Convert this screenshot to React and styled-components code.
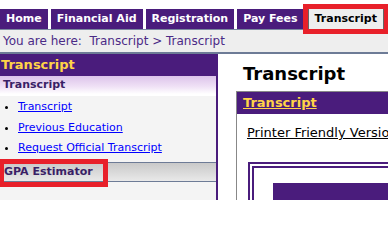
import styled, { createGlobalStyle } from "styled-components";

const GlobalStyle = createGlobalStyle`
  body {
    margin: 0;
    background: #fff;
    overflow: hidden;
    font-family: "DejaVu Sans", Verdana, sans-serif;
  }
`;

const PURPLE = "#4a1c7c";

const tabs = [
  { label: "Home" },
  { label: "Financial Aid" },
  { label: "Registration" },
  { label: "Pay Fees" },
  { label: "Transcript", active: true },
  { label: "Housing" },
];

const sideLinks = ["Transcript", "Previous Education", "Request Official Transcript"];

export default function App() {
  return (
    <Page>
      <GlobalStyle />
      <TabBar>
        {tabs.map((t) => (
          <Tab key={t.label} $active={t.active}>
            {t.label}
          </Tab>
        ))}
      </TabBar>
      <Crumbs>You are here:&nbsp; Transcript &gt; Transcript</Crumbs>
      <Body>
        <Sidebar>
          <SideHeader>Transcript</SideHeader>
          <SubHeader>Transcript</SubHeader>
          <LinkList>
            {sideLinks.map((l) => (
              <li key={l}>
                <a href="#">{l}</a>
              </li>
            ))}
          </LinkList>
          <SectionBar>
            <Marked>GPA Estimator</Marked>
          </SectionBar>
        </Sidebar>
        <Main>
          <Heading>Transcript</Heading>
          <ContentBox>
            <BoxHeader>
              <a href="#">Transcript</a>
            </BoxHeader>
            <PrintLink href="#">Printer Friendly Version</PrintLink>
            <DoubleFrame>
              <InnerFrame>
                <TableHead />
              </InnerFrame>
            </DoubleFrame>
          </ContentBox>
        </Main>
      </Body>
    </Page>
  );
}

const Page = styled.div`
  width: 760px;
  height: 200px;
  overflow: hidden;
  display: flex;
  flex-direction: column;
`;

const TabBar = styled.nav`
  display: flex;
  gap: 3px;
  padding-top: 9px;
  height: 20px;
  flex: none;
`;

const Tab = styled.div`
  height: 20px;
  line-height: 20px;
  padding: 0 6px;
  font-size: 11px;
  font-weight: bold;
  white-space: nowrap;
  background: ${(p) => (p.$active ? "#eeeeee" : PURPLE)};
  color: ${(p) => (p.$active ? "#000" : "#fff")};
  ${(p) =>
    p.$active &&
    `
    margin: 0 5px 0 1px;
    border-left: 1px solid #666;
    border-right: 1px solid #666;
    outline: 5px solid #e8202a;
    position: relative;
    z-index: 1;
  `}
`;

const Crumbs = styled.div`
  flex: none;
  height: 22px;
  line-height: 22px;
  padding-left: 3px;
  background: #eeeeee;
  border-top: 1px solid #7b88a0;
  border-bottom: 2px solid #6d7b96;
  color: #4b2a86;
  font-size: 12px;
  white-space: nowrap;
`;

const Body = styled.div`
  flex: 1;
  display: flex;
  align-items: stretch;
`;

const Sidebar = styled.aside`
  width: 216px;
  flex: none;
  background: #f4f4f4;
  border-right: 2px solid ${PURPLE};
`;

const SideHeader = styled.div`
  height: 22px;
  line-height: 22px;
  padding-left: 1px;
  background: ${PURPLE};
  color: #ffd447;
  font-size: 13px;
  font-weight: bold;
`;

const SubHeader = styled.div`
  height: 18px;
  line-height: 18px;
  padding-left: 3px;
  background: linear-gradient(#dcc3ea, #f0e2f6 60%, #fff);
  border-bottom: 2px solid #fff;
  color: #3a1f66;
  font-size: 11px;
  font-weight: bold;
`;

const LinkList = styled.ul`
  margin: 0;
  padding: 1px 0 3px 18px;
  font-size: 11px;
  line-height: 20.5px;

  li::marker {
    color: #000;
  }

  a {
    color: #0000ff;
    text-decoration: underline;
  }
`;

const SectionBar = styled.div`
  height: 18px;
  background: linear-gradient(#c9c9c9, #e9e9e9);
  border-top: 1px solid #6d7b96;
  border-bottom: 1px solid #6d7b96;
`;

const Marked = styled.span`
  display: block;
  width: 99px;
  height: 18px;
  margin: 1px 0 0 4px;
  line-height: 16px;
  color: #3a1f66;
  font-size: 11px;
  font-weight: bold;
  white-space: nowrap;
  outline: 5px solid #e8202a;
  position: relative;
  z-index: 1;
`;

const Main = styled.main`
  flex: 1;
  padding-left: 18px;
`;

const Heading = styled.h1`
  margin: 8px 0 5px 7px;
  font-size: 18px;
  line-height: 24px;
  font-weight: bold;
  color: #000;
`;

const ContentBox = styled.section`
  border: 1px solid #888;
  min-height: 120px;
`;

const BoxHeader = styled.div`
  height: 22px;
  line-height: 22px;
  padding-left: 6px;
  background: ${PURPLE};
  font-size: 13px;
  font-weight: bold;

  a {
    color: #ffd447;
    text-decoration: underline;
  }
`;

const PrintLink = styled.a`
  display: inline-block;
  margin: 11px 0 0 10px;
  font-size: 13px;
  line-height: 16px;
  color: #000;
  text-decoration: underline;
`;

const DoubleFrame = styled.div`
  margin: 21px 0 0 11px;
  border: 2px solid ${PURPLE};
  padding: 2px;
`;

const InnerFrame = styled.div`
  border: 2px solid ${PURPLE};
  padding: 15px 0 0 19px;
`;

const TableHead = styled.div`
  height: 40px;
  background: ${PURPLE};
`;
